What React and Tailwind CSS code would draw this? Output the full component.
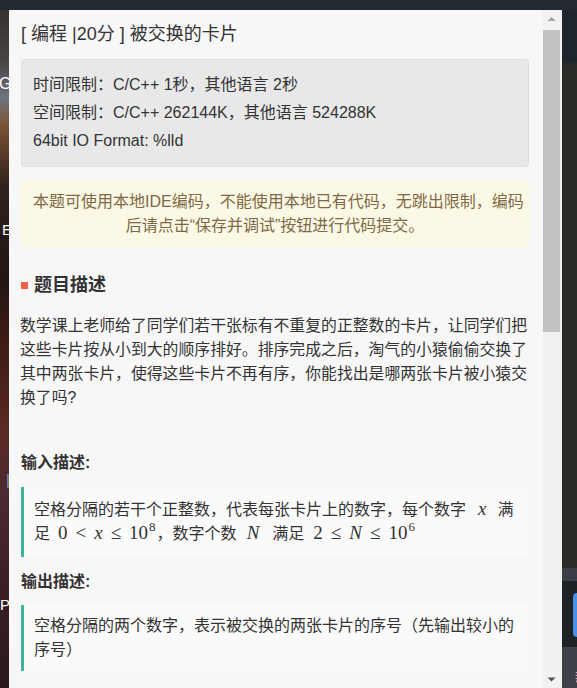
import React from "react";

const FONT = "font-['Liberation_Sans','Noto_Sans_CJK_SC',sans-serif]";
const SERIF = "font-['Liberation_Serif','DejaVu_Serif',serif] text-[19px] leading-none";

function I({ children }) {
  return <span className="italic">{children}</span>;
}

function Rel({ children }) {
  return <span className="mx-[8px]">{children}</span>;
}

function Sup({ children }) {
  return <span className="relative top-[-8px] text-[13px] ml-[1px]">{children}</span>;
}

function LeftStrip() {
  return (
    <div className="relative w-[9px] shrink-0 overflow-hidden bg-[linear-gradient(to_bottom,#35312e_0%,#4a4644_8%,#6f7580_13%,#7b5232_17%,#2f211b_26%,#231714_40%,#3c1a14_48%,#5b2a24_62%,#4a2a30_72%,#3a1e22_86%,#2a1a1c_100%)]">
      <span className={`absolute left-[-1px] top-[66px] text-[16px] leading-[16px] text-white ${FONT}`}>G</span>
      <span className={`absolute left-[2px] top-[212px] text-[15px] leading-[16px] text-white ${FONT}`}>E</span>
      <span className={`absolute left-[6px] top-[462px] text-[15px] leading-[16px] text-[#7d9fd0] ${FONT}`}>|</span>
      <span className={`absolute left-[0px] top-[587px] text-[15px] leading-[16px] text-white ${FONT}`}>P</span>
    </div>
  );
}

function RightStrip() {
  return (
    <div className="w-[15px] shrink-0 flex flex-col overflow-hidden">
      <div className="h-[53px] bg-[#1e252d]" />
      <div className="h-[505px] bg-[#2b2a24]" />
      <div className="h-[13px] bg-[#3b4047]" />
      <div className="h-[66px] bg-[#1d2226] pt-[12px] pl-[11px]">
        <div className="h-[44px] w-[10px] rounded-l-[4px] bg-[#4a8fe0]" />
      </div>
      <div className="flex-1 bg-[#3d4148] pt-[22px] pl-[13px]">
        <div className={`text-[14px] leading-[16px] text-[#e7a0b4] ${FONT}`}>新</div>
      </div>
    </div>
  );
}

function Scrollbar() {
  return (
    <div className="w-[19px] shrink-0 bg-[#f1f1f1] flex flex-col justify-between pr-[2px]">
      <div className="flex flex-col">
        <div className="h-[17px] w-[17px] flex items-center justify-center">
          <svg width="17" height="17" viewBox="0 0 17 17">
            <polygon points="4.5,11 8.5,7 12.5,11" fill="#a3a3a3" />
          </svg>
        </div>
        <div className="mt-[3px] h-[302px] w-[17px] bg-[#c1c1c1]" />
      </div>
      <div className="h-[17px] w-[17px] flex items-center justify-center">
        <svg width="17" height="17" viewBox="0 0 17 17">
          <polygon points="4.5,6.5 12.5,6.5 8.5,10.5" fill="#505050" />
        </svg>
      </div>
    </div>
  );
}

function Content() {
  return (
    <div className={`w-[534px] shrink-0 overflow-hidden pl-[12px] pr-[14px] pt-[12px] text-[#333] ${FONT}`}>
      <div className="text-[18px] leading-[24px] whitespace-nowrap">[ 编程 |20分 ] 被交换的卡片</div>

      <div className="mt-[13px] rounded-[4px] border border-[#dcdcdc] bg-[#e8e8e8] px-[11px] py-[11px] text-[16px] leading-[28px] text-[#333]">
        <div>时间限制：C/C++ 1秒，其他语言 2秒</div>
        <div>空间限制：C/C++ 262144K，其他语言 524288K</div>
        <div>64bit IO Format: %lld</div>
      </div>

      <div className="mt-[13px] rounded-[4px] bg-[#fcf8e6] px-[12px] py-[10px] text-center text-[16px] leading-[24px] text-[#7d6a45]">
        <div className="whitespace-nowrap">本题可使用本地IDE编码，不能使用本地已有代码，无跳出限制，编码</div>
        <div className="whitespace-nowrap">后请点击“保存并调试”按钮进行代码提交。</div>
      </div>

      <div className="mt-[25px] flex items-center h-[24px]">
        <div className="w-[7px] h-[7px] bg-[#f0614a] mr-[6px]" />
        <div className="text-[18px] leading-[24px] font-bold text-[#333]">题目描述</div>
      </div>

      <div className="mt-[17px] -ml-[1px] text-[15.85px] leading-[24px] text-[#333] whitespace-nowrap">
        <div>数学课上老师给了同学们若干张标有不重复的正整数的卡片，让同学们把</div>
        <div>这些卡片按从小到大的顺序排好。排序完成之后，淘气的小猿偷偷交换了</div>
        <div>其中两张卡片，使得这些卡片不再有序，你能找出是哪两张卡片被小猿交</div>
        <div>换了吗?</div>
      </div>

      <div className="mt-[41px] text-[16px] leading-[24px] font-bold text-[#333]">输入描述:</div>

      <div className="mt-[12px] border-l-[3px] border-[#40b49a] bg-[#fafafa] pl-[10px] py-[11px] text-[16px] leading-[24px] text-[#333] whitespace-nowrap">
        <div>
          空格分隔的若干个正整数，代表每张卡片上的数字，每个数字
          <span className={`${SERIF} ml-[12px] mr-[11px]`}><I>x</I></span>
          满
        </div>
        <div>
          足
          <span className={`${SERIF} ml-[8px] mr-[1px]`}>
            0<Rel>&lt;</Rel><I>x</I><Rel>≤</Rel>10<Sup>8</Sup>
          </span>
          ，数字个数
          <span className={`${SERIF} ml-[10px] mr-[13px]`}><I>N</I></span>
          满足
          <span className={`${SERIF} ml-[9px]`}>
            2<Rel>≤</Rel><I>N</I><Rel>≤</Rel>10<Sup>6</Sup>
          </span>
        </div>
      </div>

      <div className="mt-[13px] text-[16px] leading-[24px] font-bold text-[#333]">输出描述:</div>

      <div className="mt-[11px] border-l-[3px] border-[#40b49a] bg-[#fafafa] pl-[10px] py-[9px] text-[16px] leading-[24px] text-[#333] whitespace-nowrap">
        <div>空格分隔的两个数字，表示被交换的两张卡片的序号（先输出较小的</div>
        <div>序号）</div>
      </div>
    </div>
  );
}

export default function App() {
  return (
    <div className="w-[577px] h-[688px] overflow-hidden flex flex-col bg-[#212830]">
      <div className="h-[10px] shrink-0 bg-[#222930]" />
      <div className="flex flex-1 min-h-0">
        <LeftStrip />
        <div className="w-[553px] shrink-0 flex bg-[#f7f7f7]">
          <Content />
          <Scrollbar />
        </div>
        <RightStrip />
      </div>
    </div>
  );
}
